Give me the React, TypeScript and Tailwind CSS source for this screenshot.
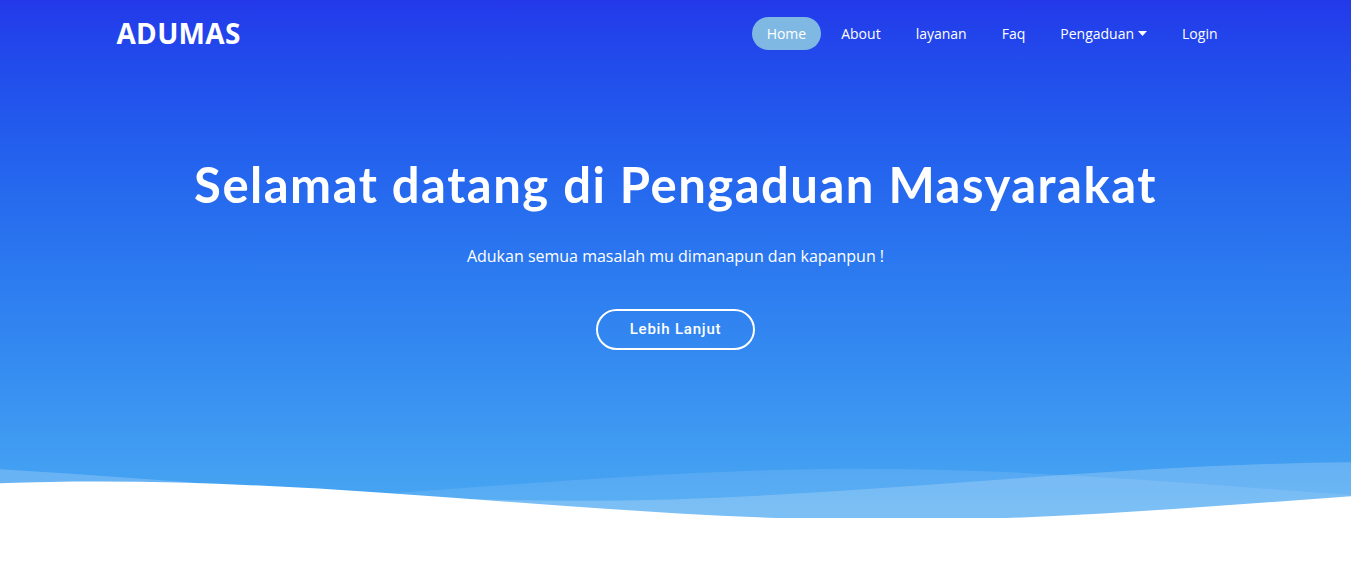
const navItems = ["Home", "About", "layanan", "Faq", "Pengaduan", "Login"];

function HeroWaves() {
  // three sine-ish bands layered at the bottom of the hero
  const d = "M-160 44c30 0 58-18 88-18s58 18 88 18 58-18 88-18 58 18 88 18v44h-352z";
  return (
    <svg
      className="block h-[60px] w-full"
      viewBox="0 24 150 28"
      preserveAspectRatio="none"
      xmlns="http://www.w3.org/2000/svg"
    >
      <path d={d} transform="translate(-8.5 3)" fill="rgba(255,255,255,0.1)" />
      <path d={d} transform="translate(48 0)" fill="rgba(255,255,255,0.2)" />
      <path d={d} transform="translate(83 9)" fill="#fff" />
    </svg>
  );
}

export default function App() {
  return (
    <div className="min-h-[564px] bg-white font-['Open_Sans',sans-serif]">
      {/* ── Hero ── */}
      <section className="flex h-[518px] flex-col bg-gradient-to-b from-[#2339ea] to-[#49a8f2]">
        <header className="mx-auto flex h-[66px] w-[1140px] items-center justify-between pl-[11px] pr-[13px]">
          <a className="text-[28px] font-bold leading-none tracking-[0.3px] text-white">ADUMAS</a>
          <nav className="flex items-center gap-[5px]">
            {navItems.map((item) => (
              <a
                key={item}
                className={
                  "flex h-[33px] items-center rounded-full px-[15px] text-[14px] font-medium text-white " +
                  (item === "Home" ? "bg-[#7fb9e3]" : "")
                }
              >
                {item}
                {item === "Pengaduan" && (
                  <svg className="ml-[4px]" width="9" height="5" viewBox="0 0 9 5">
                    <path d="M0 0h9L4.5 5z" fill="#fff" />
                  </svg>
                )}
              </a>
            ))}
          </nav>
        </header>

        <div className="flex flex-1 flex-col items-center pt-[90px] text-center text-white">
          <h1 className="font-['Lato',sans-serif] text-[49px] font-bold leading-[56px] tracking-[1.5px]">
            Selamat datang di Pengaduan Masyarakat
          </h1>
          <p className="mt-[32px] text-[16px] leading-[24px]">
            Adukan semua masalah mu dimanapun dan kapanpun !
          </p>
          <a className="mt-[41px] flex h-[41px] w-[159px] items-center justify-center rounded-full border-2 border-white font-['Roboto',sans-serif] text-[15px] font-medium tracking-[0.8px]">
            Lebih Lanjut
          </a>
        </div>

        <HeroWaves />
      </section>
    </div>
  );
}
